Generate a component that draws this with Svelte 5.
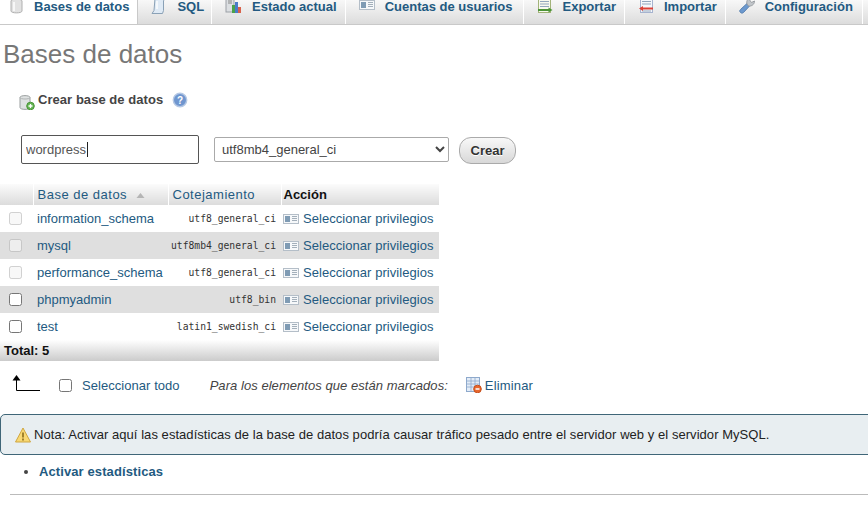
<script lang="ts">
  const tabs = [
    { id: "db", label: "Bases de datos", active: true },
    { id: "sql", label: "SQL" },
    { id: "status", label: "Estado actual" },
    { id: "users", label: "Cuentas de usuarios" },
    { id: "export", label: "Exportar" },
    { id: "import", label: "Importar" },
    { id: "wrench", label: "Configuración" },
  ];

  const rows = [
    { name: "information_schema", coll: "utf8_general_ci", locked: true },
    { name: "mysql", coll: "utf8mb4_general_ci", locked: true },
    { name: "performance_schema", coll: "utf8_general_ci", locked: true },
    { name: "phpmyadmin", coll: "utf8_bin", locked: false },
    { name: "test", coll: "latin1_swedish_ci", locked: false },
  ];
</script>

{#snippet card()}
  <svg class="ico card" width="16" height="16" viewBox="0 0 16 16">
    <rect x="0.500" y="3.500" width="15" height="9" fill="#f6f8fa" stroke="#b4bec8" />
    <rect x="2" y="5" width="5" height="6" fill="#7f9bb4" />
    <path d="M9 5.500h5M9 7.500h5M9 9.500h5" stroke="#a3afba" />
  </svg>
{/snippet}

{#snippet tabIcon(id)}
  <svg class="ico" width="16" height="18" viewBox="0 0 16 18">
    {#if id === "db"}
      <path d="M2 4c0-2.500 11-2.500 11 0v10c0 2.500-11 2.500-11 0z" fill="#e2e2e2" stroke="#b0b0b0" />
      <path d="M5 5v9" stroke="#f7f7f7" stroke-width="2" />
    {:else if id === "sql"}
      <path d="M4 1.500h11l-2.500 2v10l-1 3H1l2-3z" fill="#dfeaf5" stroke="#8aa1b6" />
      <path d="M6 4v8" stroke="#f4f8fb" stroke-width="2" />
    {:else if id === "status"}
      <rect x="1" y="1" width="8" height="14" fill="#dcdfe2" stroke="#9ba0a6" />
      <path d="M3 4h4M3 6h4" stroke="#888" />
      <rect x="7" y="8" width="3" height="8" fill="#4aa34a" />
      <rect x="10" y="5" width="3" height="11" fill="#4a7cc9" />
      <rect x="13" y="10" width="3" height="6" fill="#d8624a" />
    {:else if id === "users"}
      <rect x="0.500" y="3.500" width="15" height="9" fill="#f6f8fa" stroke="#b4bec8" />
      <rect x="2" y="5" width="5" height="6" fill="#7f9bb4" />
      <path d="M9 5.500h5M9 7.500h5M9 9.500h5" stroke="#a3afba" />
    {:else if id === "export"}
      <rect x="1.500" y="1.500" width="12" height="14" fill="#f7f9ee" stroke="#a3b37a" />
      <path d="M3 4.500h9M3 7h9M3 9.500h9" stroke="#93a7bd" />
      <path d="M1 13h11" stroke="#4c9437" stroke-width="2" />
      <path d="M11.500 10.500l4 2.500-4 2.500z" fill="#4c9437" />
    {:else if id === "import"}
      <rect x="2.500" y="1.500" width="12" height="14" fill="#f5f7fb" stroke="#a6b3cf" />
      <path d="M4 4.500h9M4 7h9M4 14h9" stroke="#93a7bd" />
      <path d="M4 11.500h11" stroke="#dc4238" stroke-width="2" />
      <path d="M5 9l-4 2.500L5 14z" fill="#dc4238" />
    {:else}
      <path d="M1.500 15.500c-1.500-1.500-.5-2.500 0-3L8 6.500 10.500 9l-6 6.500c-.6.600-2 1-3 0z" fill="#6c99cf" stroke="#5a82b0" />
      <path d="M8 7c-1-3 1-6.500 5-6.500l-2 3 1.500 2 3-1.500c0 3.500-3 5.500-6 5z" fill="#c2c6ca" stroke="#9a9ea3" />
    {/if}
  </svg>
{/snippet}

<nav class="tabs">
  {#each tabs as t}
    <a class="tab" class:active={t.active} href="#top">
      {@render tabIcon(t.id)}
      <span>{t.label}</span>
    </a>
  {/each}
</nav>

<h2>Bases de datos</h2>

<form class="create" onsubmit={(e) => e.preventDefault()}>
  <div class="create-title">
    <svg class="ico" width="16" height="16" viewBox="0 0 16 16">
      <path d="M1 3.500c0-2.500 10-2.500 10 0v10c0 2.500-10 2.500-10 0z" fill="#dfe2e2" stroke="#9a9f9f" />
      <path d="M1 3.500c0 2 10 2 10 0" fill="none" stroke="#afb3b3" />
      <circle cx="11.500" cy="12" r="3.800" fill="#64b552" stroke="#4a9339" />
      <path d="M9.500 12h4M11.500 10v4" stroke="#fff" stroke-width="1.300" />
    </svg>
    <strong>Crear base de datos</strong>
    <svg class="ico help" width="16" height="16" viewBox="0 0 16 16">
      <circle cx="8" cy="8" r="6.700" fill="#6f96cf" stroke="#b5c8e4" stroke-width="1.400" />
      <text x="8" y="11.500" text-anchor="middle" class="q">?</text>
    </svg>
  </div>
  <div class="create-fields">
    <div class="name-box">
      <input type="text" value="wordpress" />
      <span class="caret"></span>
    </div>
    <select>
      <option>utf8mb4_general_ci</option>
    </select>
    <button type="submit">Crear</button>
  </div>
</form>

<table>
  <colgroup>
    <col style="width:33px" /><col style="width:135px" /><col style="width:113px" /><col style="width:158px" />
  </colgroup>
  <thead>
    <tr>
      <th></th>
      <th class="sort">
        <a href="#top">Base de datos</a>
        <svg width="9" height="5" viewBox="0 0 9 5"><path d="M4.500 0l4 5H.500z" fill="#b5b5b5" /></svg>
      </th>
      <th><a href="#top">Cotejamiento</a></th>
      <th class="act-head">Acción</th>
    </tr>
  </thead>
  <tbody>
    {#each rows as r}
      <tr>
        <td class="chk"><input type="checkbox" disabled={r.locked} /></td>
        <td class="name"><a href="#top">{r.name}</a></td>
        <td class="coll">{r.coll}</td>
        <td class="act">{@render card()}<a href="#top">Seleccionar privilegios</a></td>
      </tr>
    {/each}
  </tbody>
  <tfoot>
    <tr><th colspan="4">Total: 5</th></tr>
  </tfoot>
</table>

<div class="bulk">
  <svg class="arrow" width="28" height="16" viewBox="0 0 28 16">
    <path d="M4.500 5v10.500H28" fill="none" stroke="#000" />
    <path d="M4.500 0l4 5.500h-8z" fill="#000" />
  </svg>
  <label class="all"><input type="checkbox" /><span>Seleccionar todo</span></label>
  <em>Para los elementos que están marcados:</em>
  <a class="drop" href="#top">
    <svg class="ico" width="16" height="16" viewBox="0 0 16 16">
      <rect x="0.500" y="0.500" width="13" height="14" fill="#e3ecf7" stroke="#8ea9cc" />
      <path d="M1 4h12M1 7h12M1 10h12M5 1v13M9 1v13" stroke="#8ea9cc" stroke-width="0.800" />
      <circle cx="11.500" cy="12" r="3.800" fill="#e8672d" stroke="#c54f1c" />
      <path d="M9.500 12h4" stroke="#fff" stroke-width="1.500" />
    </svg>
    Eliminar
  </a>
</div>

<div class="notice">
  <svg class="ico" width="16" height="16" viewBox="0 0 16 16">
    <path d="M8 1L15.500 15H.500z" fill="#f8d873" stroke="#cfa640" stroke-linejoin="round" />
    <path d="M8 5.500v5M8 11.500v2" stroke="#8b6d1c" stroke-width="1.600" />
  </svg>
  <span>Nota: Activar aquí las estadísticas de la base de datos podría causar tráfico pesado entre el servidor web y el servidor MySQL.</span>
</div>

<ul>
  <li><a href="#top">Activar estadísticas</a></li>
</ul>

<hr />

<style>
  :global(body) {
    margin: 0;
    background: #fff;
    color: #444;
    font-family: "Liberation Sans", Arial, sans-serif;
    font-size: 13px;
    overflow: hidden;
  }

  a {
    color: #235a81;
    text-decoration: none;
  }

  .ico {
    flex: none;
  }

  .tabs {
    display: flex;
    height: 24px;
    overflow: hidden;
    background: linear-gradient(#f8f8f8, #dcdcdc);
    border-bottom: 1px solid #c9c9c9;
    box-sizing: content-box;
  }
  .tab {
    display: flex;
    align-items: flex-start;
    gap: 10px;
    padding: 0 9px 0 13px;
    height: 24px;
    line-height: 13px;
    font-weight: bold;
    border-right: 1px solid #fff;
    white-space: nowrap;
  }
  .tab:nth-child(1) {
    padding-left: 9px;
    padding-right: 8px;
    gap: 9px;
  }
  .tab:nth-child(2) {
    padding-right: 7px;
  }
  .tab:nth-child(3) {
    padding-right: 8px;
    gap: 11px;
  }
  .tab:nth-child(4) {
    padding-right: 10px;
  }
  .tab:nth-child(5),
  .tab:nth-child(6) {
    padding-right: 8px;
  }
  .tab.active {
    background: #fff;
    height: 25px;
    border-right: 1px solid #c9c9c9;
  }
  .tab .ico {
    margin-top: -3px;
  }

  h2 {
    margin: 13px 0 0 3px;
    font-size: 26px;
    font-weight: normal;
    line-height: 32px;
    color: #777;
  }

  .create {
    margin: 0;
  }
  .create-title {
    display: flex;
    align-items: center;
    margin: 20px 0 0 19px;
    height: 20px;
    letter-spacing: 0.05px;
  }
  .create-title strong {
    margin-top: -1px;
  }
  .create-title .ico:first-child {
    margin-top: 3px;
    margin-right: 3px;
  }
  .help {
    margin-left: 9px;
  }
  .q {
    font: bold 10px "Liberation Sans", sans-serif;
    fill: #fff;
  }

  .create-fields {
    display: flex;
    align-items: flex-start;
    margin: 25px 0 0 21px;
  }
  .name-box {
    position: relative;
  }
  input[type="text"] {
    display: block;
    box-sizing: border-box;
    width: 178px;
    height: 29px;
    padding: 0 4px;
    border: 1px solid #555;
    border-radius: 2px;
    background: #fff;
    color: #555;
    font: 13px "Liberation Sans", sans-serif;
    outline: none;
  }
  .caret {
    position: absolute;
    left: 66px;
    top: 7px;
    width: 1px;
    height: 15px;
    background: #222;
  }
  select {
    box-sizing: border-box;
    width: 235px;
    height: 25px;
    margin: 2px 0 0 15px;
    padding: 0 3px;
    border: 1px solid #aaa;
    border-radius: 2px;
    background: #fff;
    color: #444;
    font: 13px "Liberation Sans", sans-serif;
  }
  button {
    box-sizing: border-box;
    width: 57px;
    height: 27px;
    margin: 2px 0 0 10px;
    padding: 0;
    border: 1px solid #aaa;
    border-radius: 12px;
    background: linear-gradient(#f8f8f8, #d8d8d8);
    color: #333;
    font: bold 13px "Liberation Sans", sans-serif;
    text-shadow: 0 1px 0 #fff;
  }

  table {
    table-layout: fixed;
    width: 439px;
    margin-top: 20px;
    border-collapse: collapse;
  }
  thead th {
    height: 21px;
    padding: 0 4px;
    box-sizing: border-box;
    background: linear-gradient(#fbfbfb, #dcdcdc);
    border-left: 1px solid #fff;
    text-align: left;
    font-weight: bold;
    color: #111;
    white-space: nowrap;
  }
  thead th:first-child {
    border-left: 0;
  }
  thead th.act-head {
    padding-left: 2px;
  }
  thead th a {
    font-weight: normal;
    letter-spacing: 0.5px;
  }
  .sort svg {
    margin-left: 5px;
    vertical-align: 1px;
  }
  td {
    height: 27px;
    padding: 0;
    box-sizing: border-box;
    white-space: nowrap;
  }
  tbody tr:nth-child(even) td {
    background: #dfdfdf;
  }
  .chk input {
    display: block;
    margin: 0 0 0 9px;
  }
  .name {
    padding-left: 4px;
  }
  .coll {
    padding-right: 5px;
    text-align: right;
    font: 9.700px "DejaVu Sans Mono", monospace;
    color: #333;
  }
  .act {
    display: flex;
    align-items: center;
    gap: 4px;
    padding-left: 2px;
    border: 0;
    height: 27px;
    letter-spacing: 0.05px;
  }
  tfoot th {
    height: 21px;
    padding: 0 4px;
    background: linear-gradient(#fff, #cbcbcb);
    text-align: left;
    font-weight: bold;
    color: #111;
  }

  .bulk {
    display: flex;
    align-items: center;
    height: 20px;
    margin: 14px 0 0 12px;
  }
  .arrow {
    margin-top: -4px;
  }
  .all {
    display: flex;
    align-items: center;
    margin-left: 19px;
    color: #235a81;
    letter-spacing: 0.05px;
  }
  .all input {
    margin: 0 10px 0 0;
  }
  .bulk em {
    margin-left: 30px;
    color: #444;
    letter-spacing: 0.05px;
  }
  .drop {
    display: flex;
    align-items: center;
    gap: 3px;
    margin-left: 18px;
    letter-spacing: 0.15px;
  }

  .notice {
    display: flex;
    align-items: center;
    gap: 3px;
    box-sizing: border-box;
    width: 880px;
    height: 41px;
    margin-top: 19px;
    padding-left: 14px;
    background: #e8eef1;
    border: 1px solid #3f6678;
    border-radius: 5px;
    color: #222;
    font-size: 13px;
    letter-spacing: 0.05px;
    white-space: nowrap;
  }

  ul {
    margin: 9px 0 0;
    padding-left: 39px;
    line-height: 16px;
    font-weight: bold;
    letter-spacing: 0.1px;
  }

  hr {
    margin: 14px 0 0 10px;
    border: 0;
    border-top: 1px solid #bbb;
  }
</style>
